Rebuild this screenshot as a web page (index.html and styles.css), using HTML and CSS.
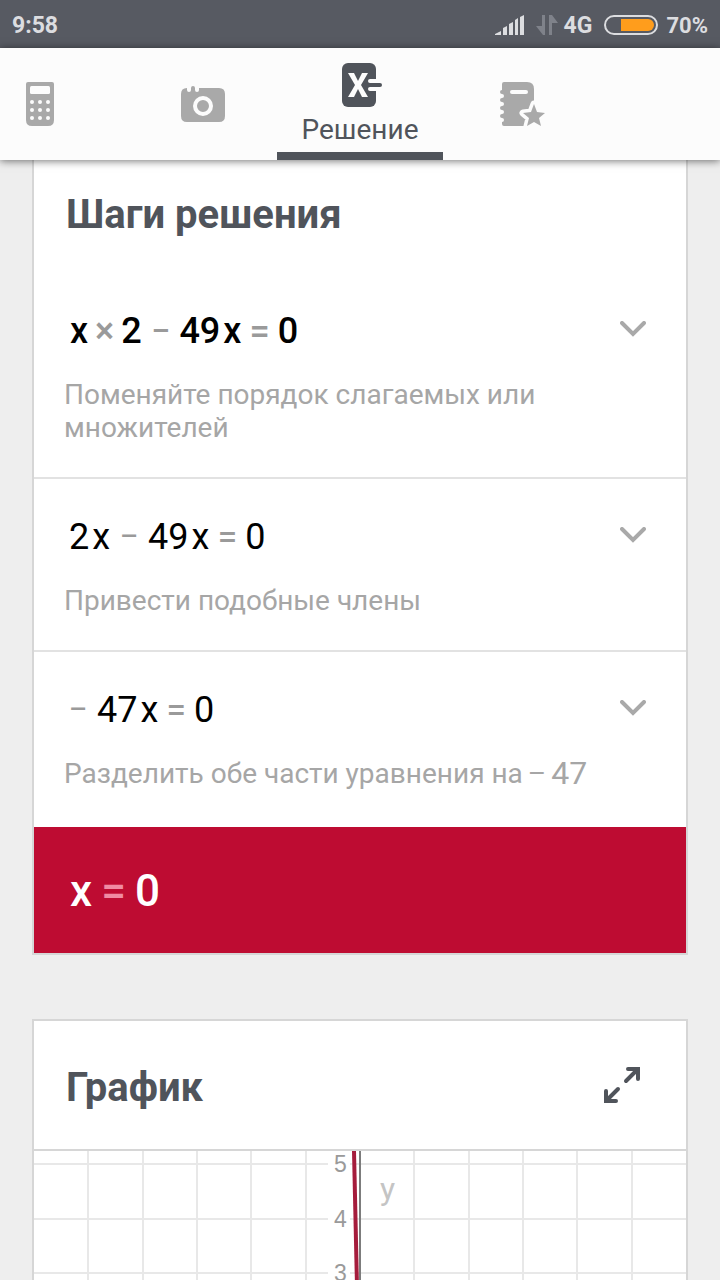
FILE: index.html
```html
<!DOCTYPE html>
<html lang="ru">
<head>
<meta charset="utf-8">
<meta name="viewport" content="width=device-width, initial-scale=1">
<title>Решение</title>
<link rel="stylesheet" href="styles.css">
</head>
<body>
<div class="app">
  <div class="status">
    <span class="clock">9:58</span>
    <svg class="signal" width="30" height="20" viewBox="0 0 30 20" fill="#dcdde0"><path d="M0 20v-1l6-3v4zM8 20v-7l4-2v9zM14 20V9l4-2v13zM20 20V5l3-2v17zM25 20V2l4-2v20z"/></svg>
    <svg class="transfer" width="22" height="20" viewBox="0 0 22 20" fill="#7f828a"><path d="M6 0h3v20H7L0 11h6zM13 0h3l6 8h-6v12h-3z"/></svg>
    <span class="network">4G</span>
    <svg class="battery" width="54" height="20" viewBox="0 0 54 20"><rect x="1" y="1" width="52" height="18" rx="9" fill="none" stroke="#dcdde0" stroke-width="2"/><path d="M17 4h27a6 6 0 0 1 0 12H17z" fill="#ff9d1c"/></svg>
    <span class="percent">70%</span>
  </div>

  <nav class="tabs">
    <button class="tab tab-first" aria-label="Калькулятор">
      <svg width="28" height="44" viewBox="0 0 28 44"><path d="M2 0h24q2 0 2 2v36q0 6-6 6H6q-6 0-6-6V2q0-2 2-2z" fill="#a9a9a9"/><g fill="#fcfcfc"><rect x="4" y="4" width="20" height="8" rx="1.500"/><circle cx="6" cy="20" r="2"/><circle cx="14" cy="20" r="2"/><circle cx="22" cy="20" r="2"/><circle cx="6" cy="28" r="2"/><circle cx="14" cy="28" r="2"/><circle cx="22" cy="28" r="2"/><circle cx="6" cy="36" r="2"/><circle cx="14" cy="36" r="2"/><circle cx="22" cy="36" r="2"/></g></svg>
    </button>
    <button class="tab" aria-label="Камера">
      <svg width="44" height="36" viewBox="0 0 44 36"><path d="M6 2Q0 2 0 8v22q0 6 6 6h32q6 0 6-6V8q0-6-6-6H18v2q0 2-2 2t-2-2V2q0-2-2-2t-2 2v2q0 2-2 2T6 4z" fill="#a9a9a9"/><circle cx="22" cy="20" r="8" fill="none" stroke="#fcfcfc" stroke-width="4"/></svg>
    </button>
    <button class="tab tab-active" aria-current="page">
      <svg class="tab-icon" width="46" height="44" viewBox="-4 0 46 44"><rect x="1" width="34" height="44" rx="6" fill="#50545b"/><path d="M7 10h6l4 8 4-8h6l-7 12 7 12h-6l-4-8-4 8H7l7-12z" fill="#fcfcfc"/><path d="M36 18h-7M36 26h-7" stroke="#fcfcfc" stroke-width="4" stroke-linecap="round"/><path d="M29 22h10" stroke="#50545b" stroke-width="4" stroke-linecap="round"/></svg>
      <span>Решение</span>
    </button>
    <button class="tab" aria-label="Тетрадь">
      <svg width="46" height="44" viewBox="0 0 46 44"><path d="M4 0h23q7 0 7 7v37H4q-2 0-2-2v-2q2 0 2-2t-2-2q-2 0-2-2t2-2q2 0 2-2t-2-2q-2 0-2-2t2-2q2 0 2-2t-2-2q-2 0-2-2t2-2q2 0 2-2t-2-2q-2 0-2-2t2-2V2q0-2 2-2z" fill="#a9a9a9"/><path d="M12 10h14" stroke="#fcfcfc" stroke-width="4" stroke-linecap="round"/><path d="M34 22l3 8 8 1-6 5 2 8-7-4-7 4 2-8-6-5 8-1z" fill="#fcfcfc" stroke="#fcfcfc" stroke-width="7" stroke-linejoin="round"/><path d="M34 22l3 8 8 1-6 5 2 8-7-4-7 4 2-8-6-5 8-1z" fill="#a9a9a9"/></svg>
    </button>
  </nav>

  <main class="content">
    <section class="card card-steps">
      <h1 class="heading">Шаги решения</h1>
      <div class="step">
        <div class="step-row">
          <div class="equation strong"><span>x</span><span class="op times">×</span><span>2</span><span class="op minus">–</span><span>49</span><span class="var">x</span><span class="op">=</span><span>0</span></div>
          <button class="chevron" aria-label="Подробнее"><svg width="26" height="16" viewBox="0 0 26 16"><path d="M2 2l11 11L24 2" fill="none" stroke="#a9a9a9" stroke-width="4" stroke-linecap="round"/></svg></button>
        </div>
        <p class="note">Поменяйте порядок слагаемых или множителей</p>
      </div>
      <div class="step">
        <div class="step-row">
          <div class="equation"><span>2</span><span class="var">x</span><span class="op minus">–</span><span>49</span><span class="var">x</span><span class="op">=</span><span>0</span></div>
          <button class="chevron" aria-label="Подробнее"><svg width="26" height="16" viewBox="0 0 26 16"><path d="M2 2l11 11L24 2" fill="none" stroke="#a9a9a9" stroke-width="4" stroke-linecap="round"/></svg></button>
        </div>
        <p class="note">Привести подобные члены</p>
      </div>
      <div class="step">
        <div class="step-row">
          <div class="equation"><span class="op minus sign">–</span><span>47</span><span class="var">x</span><span class="op">=</span><span>0</span></div>
          <button class="chevron" aria-label="Подробнее"><svg width="26" height="16" viewBox="0 0 26 16"><path d="M2 2l11 11L24 2" fill="none" stroke="#a9a9a9" stroke-width="4" stroke-linecap="round"/></svg></button>
        </div>
        <p class="note note-math"><span>Разделить обе части уравнения на</span><span>–</span><span class="number">47</span></p>
      </div>
      <div class="answer"><span>x</span><span class="op">=</span><span>0</span></div>
    </section>

    <section class="card card-graph">
      <div class="graph-head">
        <h2 class="heading">График</h2>
        <button class="expand" aria-label="Развернуть"><svg width="36" height="36" viewBox="0 0 36 36"><path d="M24 2h10v10M22 14L33 3M12 34H2V24M14 22L3 33" fill="none" stroke="#50545b" stroke-width="4" stroke-linecap="round"/><path d="M28 0h8v8zM0 28v8h8z" fill="#50545b"/></svg></button>
      </div>
      <svg class="graph" viewBox="0 0 652 326">
        <path d="M54 0v326M109 0v326M163 0v326M217 0v326M272 0v326M380 0v326M435 0v326M489 0v326M543 0v326M598 0v326M0 13h652M0 68h652M0 122h652M0 176h652M0 230h652M0 284h652" stroke="#e8e8e8" stroke-width="2"/>
        <path d="M294 0h22v326h-22z" fill="#fff"/>
        <path d="M326 0v326" stroke="#7c7c7c" stroke-width="2"/>
        <path d="M320 0L326 271" stroke="#a51c3c" stroke-width="4"/>
        <text class="tick" x="300" y="21">5</text>
        <text class="tick" x="300" y="76">4</text>
        <text class="tick" x="300" y="130">3</text>
        <text class="axis" x="346" y="49">y</text>
      </svg>
    </section>
  </main>
</div>
</body>
</html>
```
FILE: styles.css
```css
* { box-sizing: border-box; }
body {
  margin: 0;
  font-family: Roboto, "Noto Sans", sans-serif;
  background: #eeeeee;
  color: #50545b;
}
button {
  padding: 0;
  border: 0;
  background: none;
  font: inherit;
  color: inherit;
}
svg { display: block; flex: none; }
h1, h2, p { margin: 0; }

.app {
  display: flex;
  flex-direction: column;
  height: 100vh;
  overflow: hidden;
}
.status {
  flex: none;
  display: flex;
  align-items: center;
  height: 48px;
  padding: 2px 12px 0;
  background: #575a62;
  color: #dcdde0;
  font-size: 23px;
  font-weight: 700;
}
.clock { margin-right: auto; }
.transfer { margin: 0 6px 0 11px; }
.battery { margin: 0 8px 0 12px; }
.percent { font-size: 22px; }

.tabs {
  flex: none;
  display: grid;
  grid-template-columns: 129fr 148fr 166fr 160fr 117fr;
  height: 112px;
  background: #fcfcfc;
  box-shadow: 0 1px 8px rgba(0, 0, 0, 0.55);
  z-index: 1;
}
.tab {
  display: flex;
  flex-direction: column;
  align-items: center;
  justify-content: center;
}
.tab-first { align-items: flex-start; padding-left: 26px; }
.tab-active {
  justify-content: flex-end;
  border-bottom: 8px solid #50545b;
  font-size: 28px;
  line-height: 32px;
}
.tab-icon { margin-bottom: 7px; }
.tab-active span { margin-bottom: 6px; }

.content {
  flex: 1;
  min-height: 0;
  overflow: hidden;
  padding: 0 32px;
}
.card {
  background: #fff;
  border: 2px solid #d6d6d6;
}
.card-steps { border-top: 0; }
.card-graph { margin-top: 64px; }
.heading {
  font-size: 40px;
  line-height: 48px;
  font-weight: 700;
}
.card-steps .heading { padding: 31px 32px 34px; }

.step { padding: 34px 30px 33px; }
.step + .step { border-top: 2px solid #e2e2e2; }
.step-row {
  display: flex;
  align-items: center;
  justify-content: space-between;
  padding: 0 10px 0 5px;
}
.strong { padding-left: 1px; }
.chevron { padding-bottom: 4px; }
.equation, .answer {
  display: flex;
  font-size: 36px;
  line-height: 48px;
  color: #000;
}
.strong, .answer { font-weight: 500; }
.op { margin: 0 8px; color: #9a9a9a; }
.times { margin: 0 7px; }
.minus { margin: 0 10px; font-size: 28px; font-weight: 500; }
.strong .minus { font-weight: 700; }
.sign { margin-left: 0; }
.var { margin-left: 3px; }
.note {
  margin-top: 23px;
  font-size: 28px;
  line-height: 33px;
  color: #a6a6a6;
}
.note-math {
  display: flex;
  flex-wrap: wrap;
  gap: 5px;
  min-height: 37px;
}
.number { font-size: 32px; }
.answer {
  padding: 36px 36px 34px;
  background: #be0c32;
  color: #fff;
  font-size: 44px;
  line-height: 56px;
}
.answer .op { margin: 0 9px; color: #f08ba3; }

.graph-head {
  display: flex;
  align-items: center;
  justify-content: space-between;
  height: 130px;
  padding: 0 46px 0 32px;
  border-bottom: 2px solid #d6d6d6;
}
.graph-head .heading { padding-top: 5px; }
.graph { width: 100%; }
.tick { font: 23px "Liberation Sans", sans-serif; fill: #9a9a9a; }
.axis { font-size: 32px; fill: #c4c4c4; }
```
